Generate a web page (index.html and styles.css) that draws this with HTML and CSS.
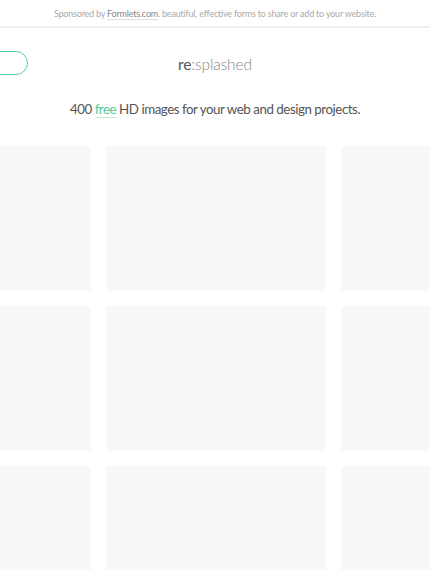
FILE: index.html
```html
<!DOCTYPE html>
<html lang="en">
<head>
    <meta charset="UTF-8">
    <meta name="viewport" content="width=device-width, initial-scale=1.0">
    <title>re:splashed</title>
    <link rel="stylesheet" href="styles.css">
</head>
<body>
    <div class="sponsor">
        Sponsored by <a href="#">Formlets.com</a>. beautiful, effective forms to share or add to your website.
    </div>

    <header>
        <div class="menu-cell"><a class="menu-btn" href="#"></a></div>
        <div class="logo"><span class="re">re</span>:splashed</div>
        <div></div>
    </header>

    <h1 class="tagline">400 <a href="#">free</a> HD images for your web and design projects.</h1>

    <div class="gallery">
        <div class="row">
            <div class="tile"></div>
            <div class="tile"></div>
            <div class="tile"></div>
        </div>
        <div class="row">
            <div class="tile"></div>
            <div class="tile"></div>
            <div class="tile"></div>
        </div>
        <div class="row">
            <div class="tile"></div>
            <div class="tile"></div>
            <div class="tile"></div>
        </div>
    </div>
</body>
</html>
```

FILE: styles.css
```css
body {
    font-family: Lato, "Open Sans", sans-serif;
    margin: 0;
    padding: 0;
    background-color: #fff;
    color: #555;
    overflow: hidden;
}

.sponsor {
    height: 26px;
    line-height: 28px;
    text-align: center;
    font-size: 9px;
    letter-spacing: -0.2px;
    color: #aaa;
    border-bottom: 2px solid #efefef;
}

.sponsor a {
    color: #888;
    text-decoration: none;
    border-bottom: 1px solid #ddd;
}

header {
    display: grid;
    grid-template-columns: 1fr auto 1fr;
    align-items: center;
    margin-top: 22px;
    height: 25px;
}

.menu-btn {
    display: block;
    width: 90px;
    height: 22px;
    margin-left: -64px;
    border: 1.5px solid #52d1a0;
    border-radius: 13px;
}

.logo {
    font-size: 15.5px;
    font-weight: 300;
    letter-spacing: -0.1px;
    color: #888;
    padding-top: 2px;
}

.logo .re {
    font-weight: 400;
    color: #555;
}

.tagline {
    margin: 26px 0 0;
    text-align: center;
    font-size: 13.3px;
    font-weight: 400;
    letter-spacing: -0.45px;
    color: #555;
}

.tagline a {
    color: #52c99a;
    text-decoration: none;
    border-bottom: 1px solid #bdeed9;
}

.gallery {
    margin-top: 29px;
    display: flex;
    flex-direction: column;
    gap: 15px;
}

.row {
    display: flex;
    justify-content: center;
    gap: 15px;
    padding-left: 2px;
}

.tile {
    flex: 0 0 220px;
    height: 145px;
    background-color: #f8f8f8;
}
```
